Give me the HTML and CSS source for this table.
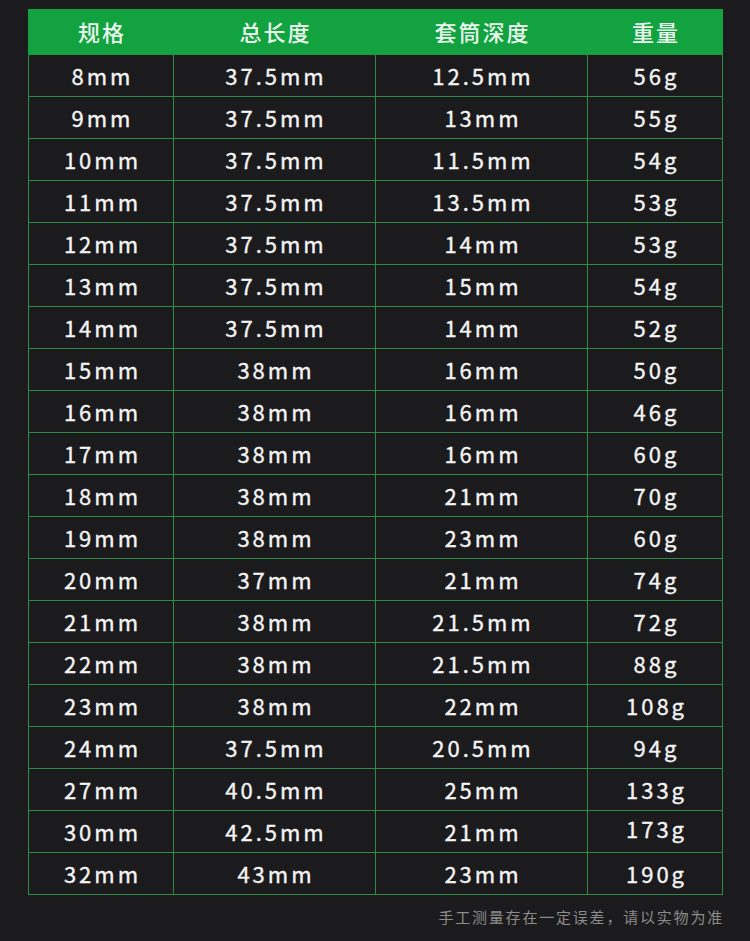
FILE: index.html
```html
<!DOCTYPE html>
<html lang="zh">
<head>
<meta charset="utf-8">
<link rel="stylesheet" href="styles.css">
</head>
<body>
<div class="page">
  <table class="spec">
    <colgroup>
      <col class="c1"><col class="c2"><col class="c3"><col class="c4">
    </colgroup>
    <thead>
      <tr><th>规格</th><th>总长度</th><th>套筒深度</th><th>重量</th></tr>
    </thead>
    <tbody>
      <tr><td>8mm</td><td>37.5mm</td><td>12.5mm</td><td>56g</td></tr>
      <tr><td>9mm</td><td>37.5mm</td><td>13mm</td><td>55g</td></tr>
      <tr><td>10mm</td><td>37.5mm</td><td>11.5mm</td><td>54g</td></tr>
      <tr><td>11mm</td><td>37.5mm</td><td>13.5mm</td><td>53g</td></tr>
      <tr><td>12mm</td><td>37.5mm</td><td>14mm</td><td>53g</td></tr>
      <tr><td>13mm</td><td>37.5mm</td><td>15mm</td><td>54g</td></tr>
      <tr><td>14mm</td><td>37.5mm</td><td>14mm</td><td>52g</td></tr>
      <tr><td>15mm</td><td>38mm</td><td>16mm</td><td>50g</td></tr>
      <tr><td>16mm</td><td>38mm</td><td>16mm</td><td>46g</td></tr>
      <tr><td>17mm</td><td>38mm</td><td>16mm</td><td>60g</td></tr>
      <tr><td>18mm</td><td>38mm</td><td>21mm</td><td>70g</td></tr>
      <tr><td>19mm</td><td>38mm</td><td>23mm</td><td>60g</td></tr>
      <tr><td>20mm</td><td>37mm</td><td>21mm</td><td>74g</td></tr>
      <tr><td>21mm</td><td>38mm</td><td>21.5mm</td><td>72g</td></tr>
      <tr><td>22mm</td><td>38mm</td><td>21.5mm</td><td>88g</td></tr>
      <tr><td>23mm</td><td>38mm</td><td>22mm</td><td>108g</td></tr>
      <tr><td>24mm</td><td>37.5mm</td><td>20.5mm</td><td>94g</td></tr>
      <tr><td>27mm</td><td>40.5mm</td><td>25mm</td><td>133g</td></tr>
      <tr><td>30mm</td><td>42.5mm</td><td>21mm</td><td><span class="up">173g</span></td></tr>
      <tr><td>32mm</td><td>43mm</td><td>23mm</td><td>190g</td></tr>
    </tbody>
  </table>
  <p class="note">手工测量存在一定误差，请以实物为准</p>
</div>
</body>
</html>
```

FILE: styles.css
```css
html, body {
  margin: 0;
  padding: 0;
  background: #1b1b1d;
}
body {
  width: 750px;
  height: 941px;
  overflow: hidden;
  font-family: "Noto Sans CJK SC", "Noto Sans", sans-serif;
}
.page {
  padding: 9px 28px 0 28px;
}
.spec {
  width: 694px;
  border-collapse: collapse;
  table-layout: fixed;
  color: #f4f4f4;
}
.c1 { width: 145px; }
.c2 { width: 202px; }
.c3 { width: 212px; }
.c4 { width: 135px; }
.spec th {
  background: #12a240;
  height: 41px;
  padding: 0 0 3px 2px;
  font-size: 22px;
  font-weight: 500;
  letter-spacing: 2px;
  color: #e9f6ec;
  border: 1px solid #12a240;
  border-bottom: 1px solid #2e8b47;
  text-align: center;
}
.spec td {
  height: 39px;
  padding: 0 0 2px 3px;
  border: 1px solid #2f8a47;
  font-size: 22px;
  letter-spacing: 3px;
  text-align: center;
  line-height: 1;
  -webkit-text-stroke: 0.35px #f4f4f4;
}
.up {
  position: relative;
  top: -3px;
}
.note {
  margin: 11px 0 0 0;
  text-align: right;
  font-size: 15px;
  letter-spacing: 1.8px;
  color: #8c8c8c;
  margin-right: -2px;
}
```
